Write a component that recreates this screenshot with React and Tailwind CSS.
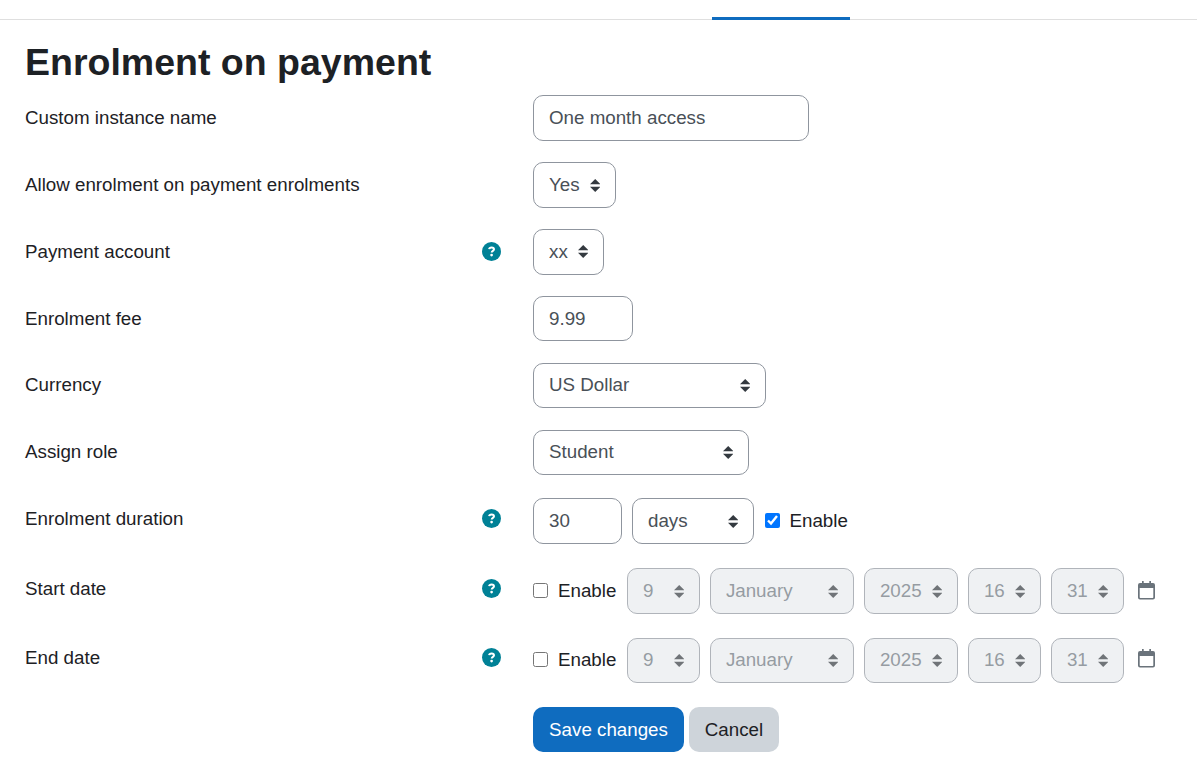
const FIELD =
    "block appearance-none rounded-[10px] border border-[#8f959e] bg-white px-[15px] text-[#495057] outline-none";

function TextField({ value, className }) {
    return <input type="text" defaultValue={value} className={`${FIELD} ${className}`} />;
}

function Select({ value, disabled, arrow = "top-[17px]", className }) {
    return (
        <div className={`relative ${disabled ? "opacity-70" : ""}`}>
            <select
                disabled={disabled}
                className={`${FIELD} disabled:bg-[#e9ecef] disabled:text-[#6a737b] ${className}`}
            >
                <option>{value}</option>
            </select>
            <svg
                viewBox="0 0 4 5"
                className={`pointer-events-none absolute right-[16px] h-[13px] w-[10.4px] ${arrow}`}
            >
                <path fill="#343a40" d="M2 0L0 2h4zm0 5L0 3h4z" />
            </svg>
        </div>
    );
}

function Enable({ checked, className }) {
    return (
        <label className={`flex items-center gap-[10px] ${className}`}>
            <input type="checkbox" defaultChecked={checked} className="mb-px size-[15px]" />
            Enable
        </label>
    );
}

function HelpIcon() {
    return (
        <svg viewBox="0 0 19 19" className="mb-px size-[19px]">
            <circle cx="9.5" cy="9.5" r="9.5" fill="#008196" />
            <path
                d="M7.1 7.2C7.3 5.9 8.3 5.4 9.6 5.4c1.4 0 2.4.8 2.4 1.9 0 1.6-2.3 1.6-2.3 3.3"
                fill="none"
                stroke="#fff"
                strokeWidth="2"
            />
            <circle cx="9.6" cy="13.1" r="1.35" fill="#fff" />
        </svg>
    );
}

function CalendarIcon() {
    return (
        <svg viewBox="0 0 17 19" className="mb-[2px] h-[19px] w-[17px]" fill="#6a737b">
            <path d="M4 0h1.7v3H4zM11.3 0H13v3h-1.7z" />
            <path
                fillRule="evenodd"
                d="M2 2h13a2 2 0 0 1 2 2v12.5a2 2 0 0 1-2 2H2a2 2 0 0 1-2-2V4a2 2 0 0 1 2-2zM1.7 7v9.3q0 .6.6.6h12.4q.6 0 .6-.6V7z"
            />
        </svg>
    );
}

function Row({ label, help, className, labelClass = "h-[46px]", children }) {
    return (
        <div className={`flex ${className}`}>
            <div
                className={`flex w-[508px] shrink-0 items-center justify-between pr-8 ${labelClass}`}
            >
                <span>{label}</span>
                {help && <HelpIcon />}
            </div>
            <div className="flex items-start">{children}</div>
        </div>
    );
}

function DateRow({ label, className, labelClass, size, arrow }) {
    const parts = [
        ["9", "w-[73px]"],
        ["January", "w-[144px]"],
        ["2025", "w-[94px]"],
        ["16", "w-[73px]"],
        ["31", "w-[73px]"],
    ];
    return (
        <Row label={label} help className={className} labelClass={labelClass}>
            <Enable className={`mr-[11px] ${size}`} />
            <div className="flex gap-[10px]">
                {parts.map(([value, width]) => (
                    <Select
                        key={value}
                        disabled
                        value={value}
                        arrow={arrow}
                        className={`pl-[14.5px] ${width} ${size}`}
                    />
                ))}
            </div>
            <div className={`ml-[14px] flex items-center ${size}`}>
                <CalendarIcon />
            </div>
        </Row>
    );
}

export default function App() {
    return (
        <div className="h-[781px] overflow-hidden bg-white font-['Liberation_Sans',Arial,sans-serif] text-[18.75px] leading-[28px] text-[#1d2125]">
            {/* bottom edge of the tab bar */}
            <div className="flex h-5 items-end border-b border-[#dfdfdf]">
                <div className="-mb-px ml-[712px] h-[3px] w-[138px] bg-[#0f6cbf]" />
            </div>

            <form className="pl-[25px]">
                <h2 className="pt-[20px] text-[37.5px] leading-[45px] font-bold">
                    Enrolment on payment
                </h2>

                <div className="pt-[10px]">
                    <Row label="Custom instance name" className="h-[67px]">
                        <TextField value="One month access" className="h-[46px] w-[276px]" />
                    </Row>
                    <Row label="Allow enrolment on payment enrolments" className="h-[67px]">
                        <Select value="Yes" className="h-[46px] w-[83px]" />
                    </Row>
                    <Row label="Payment account" help className="h-[67px]">
                        <Select
                            value="xx"
                            arrow="top-[16px]"
                            className="h-[46px] w-[71px]"
                        />
                    </Row>
                    <Row label="Enrolment fee" className="h-[67px]">
                        <TextField value="9.99" className="h-[45px] w-[100px]" />
                    </Row>
                    <Row label="Currency" className="h-[67px]" labelClass="h-[44px]">
                        <Select
                            value="US Dollar"
                            arrow="top-[16px]"
                            className="h-[45px] w-[233px] pb-[2px]"
                        />
                    </Row>
                    <Row label="Assign role" className="h-[68px]" labelClass="h-[44px]">
                        <Select
                            value="Student"
                            arrow="top-[16px]"
                            className="h-[45px] w-[216px] pb-[2px]"
                        />
                    </Row>
                    <Row
                        label="Enrolment duration"
                        help
                        className="h-[70px]"
                        labelClass="h-[42px]"
                    >
                        <TextField value="30" className="h-[46px] w-[89px]" />
                        <div className="ml-[10px]">
                            <Select value="days" className="h-[46px] w-[122px]" />
                        </div>
                        <Enable checked className="ml-[10.5px] h-[46px]" />
                    </Row>
                    <DateRow
                        label="Start date"
                        className="h-[70px]"
                        labelClass="h-[42px]"
                        size="h-[46px]"
                        arrow="top-[17px]"
                    />
                    <DateRow
                        label="End date"
                        className="h-[69px]"
                        labelClass="h-[40px]"
                        size="h-[45px] pb-[2px]"
                        arrow="top-[16px]"
                    />
                </div>

                <div className="ml-[508px] flex gap-[5px]">
                    <button
                        type="button"
                        className="h-[45px] w-[151px] rounded-[10px] bg-[#0f6cbf] text-white"
                    >
                        Save changes
                    </button>
                    <button
                        type="button"
                        className="h-[45px] w-[90px] rounded-[10px] bg-[#ced4da]"
                    >
                        Cancel
                    </button>
                </div>
            </form>
        </div>
    );
}
